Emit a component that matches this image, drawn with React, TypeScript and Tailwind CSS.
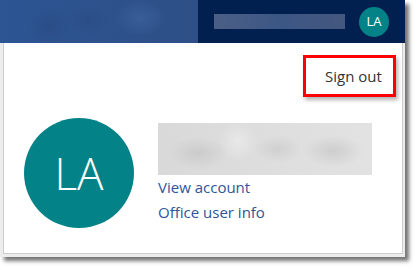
import React from "react";

const FONT = { fontFamily: '"Segoe UI", "Open Sans", "Noto Sans", sans-serif' };

export default function App() {
  return (
    <div className="h-[273px] w-[420px] bg-white" style={FONT}>
      <div className="flex h-[257px] w-[405px] flex-col bg-[#ececec] shadow-[4px_4px_4px_rgba(0,0,0,0.55)]">
        {/* top bar */}
        <div className="flex h-[43px] shrink-0">
          <div className="w-[198px] bg-[#2c5593] bg-[radial-gradient(ellipse_22px_18px_at_50px_26px,#2a4d87,transparent),radial-gradient(ellipse_22px_16px_at_88px_20px,#2b4e88,transparent),radial-gradient(ellipse_26px_18px_at_140px_18px,#3a5f98,transparent),linear-gradient(to_right,#2c5593,#2e4f86)]" />
          <div className="flex flex-1 items-center justify-end bg-[#01204f] pr-[16px]">
            <div className="mr-[14px] h-[15px] w-[131px] bg-gradient-to-r from-[#4b5f85] via-[#3c5785] to-[#44577e]" />
            <div className="flex h-[30px] w-[30px] items-center justify-center rounded-full bg-[#038387] text-[13px] text-white">
              LA
            </div>
          </div>
        </div>

        {/* panel */}
        <div className="ml-[3px] h-[211px] w-[400px] border-x border-b border-[#cdcdcd] bg-white">
          <div className="flex justify-end pr-[6px] pt-[12px]">
            <div className="flex h-[42px] w-[93px] items-center border-[3px] border-[#ff0000] pl-[19px] text-[15px] text-[#333333] shadow-[2px_3px_4px_rgba(0,0,0,0.3)]">
              Sign out
            </div>
          </div>
          <div className="mt-[21px] flex pl-[20px]">
            <div className="flex h-[110px] w-[110px] items-center justify-center rounded-full bg-[#038387] text-[44px] font-light text-white">
              LA
            </div>
            <div className="ml-[24px] mt-[5px]">
              <div className="h-[52px] w-[214px] bg-[#dcdcdc] bg-[radial-gradient(ellipse_30px_16px_at_40px_30px,#cbcbcb,transparent),radial-gradient(ellipse_20px_20px_at_80px_18px,#e8e8e8,transparent),radial-gradient(ellipse_24px_14px_at_120px_26px,#d0d0d0,transparent),radial-gradient(ellipse_30px_16px_at_175px_28px,#cecece,transparent),linear-gradient(to_right,#d9d9d9,#e2e2e2)]" />
              <div className="text-[15px] leading-[25px] text-[#2e5597]">View account</div>
              <div className="text-[15px] leading-[25px] text-[#2e5597]">Office user info</div>
            </div>
          </div>
        </div>
      </div>
    </div>
  );
}
